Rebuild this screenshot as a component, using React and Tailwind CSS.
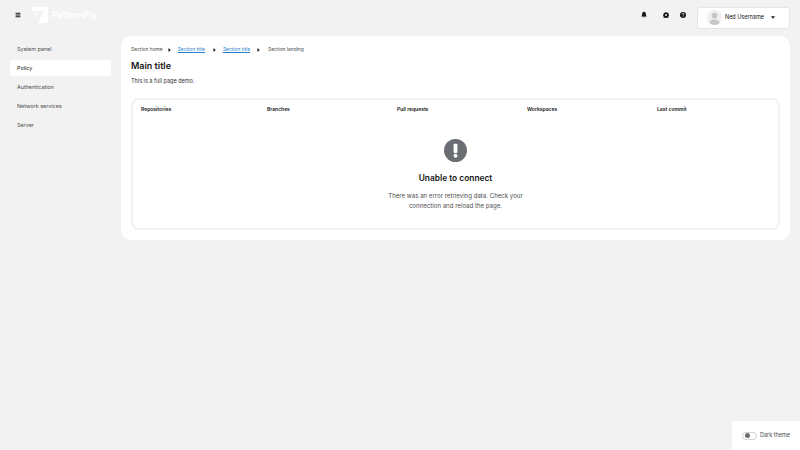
import { Menu } from 'lucide-react';

const navItems = ["System panel", "Policy", "Authentication", "Network services", "Server"];
const columns = [
  { label: "Repositories", width: "w-[126px]" },
  { label: "Branches", width: "w-[130px]" },
  { label: "Pull requests", width: "w-[130px]" },
  { label: "Workspaces", width: "w-[130px]" },
  { label: "Last commit", width: "w-[100px]" },
];

const Header = () => (
  <header className="h-[36px] flex items-center pl-[15px] pr-[10px]">
    <div className="flex items-center mb-[7px]">
      <Menu className="w-[6px] h-[6px] text-[#151515]" strokeWidth={4} />
      <div className="flex items-center ml-[11px]">
        <svg viewBox="0 0 16 16" className="w-[16px] h-[16px] fill-white">
          <path d="M0 0h16v16H6l3-6 3-6H0z" />
          <path d="M0 5h7l-3 5z" opacity="0.6" />
        </svg>
        <span className="ml-[4px] text-[9px] font-bold text-white">PatternFly</span>
      </div>
    </div>
    <div className="ml-auto flex items-center">
      <div className="flex items-center mb-[7px]">
        <svg viewBox="0 0 16 16" className="w-[6px] h-[7px] fill-[#151515]">
          <path d="M8 0a1.400 1.400 0 0 1 1.400 1.400C12 2 13 4 13 7c0 3 1 4 2 5v1H1v-1c1-1 2-2 2-5 0-3 1-5 3.600-5.600A1.400 1.400 0 0 1 8 0zM6 14h4a2 2 0 0 1-4 0z" />
        </svg>
        <svg viewBox="0 0 16 16" className="w-[6px] h-[6px] ml-[16px] fill-[#151515]">
          <path fillRule="evenodd" d="M6.500 0h3l.4 2.200 1.400.6L13.200 1.500l2.100 2.100-1.300 1.900.6 1.400 2.200.4v3l-2.200.4-.6 1.400 1.300 1.900-2.100 2.100-1.900-1.300-1.400.6-.4 2.200h-3l-.4-2.200-1.400-.6-1.900 1.300-2.100-2.100 1.300-1.900-.6-1.400L-.1 9.900v-3l2.200-.4.6-1.400L1.400 3.600l2.100-2.100 1.900 1.300 1.400-.6zM8 5.500a2.500 2.500 0 1 0 0 5 2.500 2.500 0 0 0 0-5z" />
        </svg>
        <svg viewBox="0 0 16 16" className="w-[6px] h-[6px] ml-[11px]">
          <circle cx="8" cy="8" r="8" fill="#151515" />
          <path d="M5.500 6a2.500 2.300 0 1 1 3.600 2.100c-.7.4-1.100.8-1.100 1.600" fill="none" stroke="#fff" strokeWidth="2" />
          <circle cx="8" cy="12.500" r="1.200" fill="#fff" />
        </svg>
      </div>
      <div className="ml-[11px] w-[93px] h-[22px] -mt-[1px] bg-white border border-[#e6e6e6] rounded-[3px] flex items-center pl-[9px]">
        <svg viewBox="0 0 16 16" className="w-[15px] h-[15px] rounded-full">
          <rect width="16" height="16" fill="#f0f0f0" />
          <circle cx="8" cy="6" r="3" fill="#c7c7c7" />
          <ellipse cx="8" cy="14" rx="5.500" ry="4" fill="#c7c7c7" />
        </svg>
        <span className="ml-[3px] text-[5.5px] text-[#151515]">Ned Username</span>
        <svg viewBox="0 0 8 5" className="ml-[7px] w-[4px] h-[3px] fill-[#151515]">
          <path d="M0 0h8L4 5z" />
        </svg>
      </div>
    </div>
  </header>
);

export default function App() {
  return (
    <div className="relative w-[800px] h-[450px] overflow-hidden bg-[#f2f2f2] font-['Inter',sans-serif]">
      <Header />
      <div className="flex">
        <nav className="w-[121px] pl-[10px] pr-[10px] pt-[5px] flex flex-col gap-[3px]">
          {navItems.map((item) => (
            <div
              key={item}
              className={`h-[16px] rounded-[3px] pl-[7px] pt-[1px] flex items-center text-[5.4px] ${
                item === "Policy" ? "bg-white text-[#151515]" : "text-[#4d4d4d]"
              }`}
            >
              {item}
            </div>
          ))}
        </nav>
        <main className="w-[669px] h-[204px] bg-white rounded-[10px] pl-[10px] pr-[10px] pt-[10px]">
          <div className="flex items-center h-[7px] mt-[0.5px] text-[4.9px] text-[#4d4d4d]">
            <span>Section home</span>
            <svg viewBox="0 0 6 8" className="w-[3px] h-[4px] fill-[#151515] ml-[5px] mr-[7px]"><path d="M1 0l4.500 4L1 8z" /></svg>
            <span className="text-[#2b7fd0] underline">Section title</span>
            <svg viewBox="0 0 6 8" className="w-[3px] h-[4px] fill-[#151515] ml-[8px] mr-[7px]"><path d="M1 0l4.500 4L1 8z" /></svg>
            <span className="text-[#2b7fd0] underline">Section title</span>
            <svg viewBox="0 0 6 8" className="w-[3px] h-[4px] fill-[#151515] ml-[7px] mr-[8px]"><path d="M1 0l4.500 4L1 8z" /></svg>
            <span>Section landing</span>
          </div>
          <h1 className="mt-[5.5px] text-[9px] leading-[14px] font-semibold text-[#151515]">Main title</h1>
          <p className="mt-[3px] text-[5.5px] leading-[10px] text-[#333]">This is a full page demo.</p>
          <section className="mt-[12px] h-[132px] border-2 border-[#f2f2f2] rounded-[8px] flex flex-col items-center">
            <div className="w-full flex pl-[8px] pt-[5px]">
              {columns.map((col) => (
                <div key={col.label} className={`${col.width} text-[5px] leading-[8px] font-semibold text-[#151515]`}>
                  {col.label}
                </div>
              ))}
            </div>
            <svg viewBox="0 0 24 24" className="w-[23px] h-[23px] mt-[26px]">
              <circle cx="12" cy="12" r="12" fill="#6a6e73" />
              <rect x="10" y="5" width="4" height="9.500" rx="1" fill="#fff" />
              <circle cx="12" cy="17.500" r="2" fill="#fff" />
            </svg>
            <h2 className="mt-[9px] text-[8.4px] leading-[14px] font-semibold text-[#151515]">Unable to connect</h2>
            <p className="mt-[6px] w-[150px] text-center text-[6.1px] leading-[10px] text-[#4d4d4d]">
              There was an error retrieving data. Check your connection and reload the page.
            </p>
          </section>
        </main>
      </div>
      <div className="absolute right-0 bottom-0 w-[68px] h-[29px] bg-white rounded-tl-[2px] flex items-center pl-[10px]">
        <div className="w-[15px] h-[8px] rounded-full border border-[#d2d2d2] flex items-center pl-[2px]">
          <div className="w-[5px] h-[5px] rounded-full bg-[#6a6e73]" />
        </div>
        <span className="ml-[3px] text-[5.5px] text-[#4d4d4d]">Dark theme</span>
      </div>
    </div>
  );
}
